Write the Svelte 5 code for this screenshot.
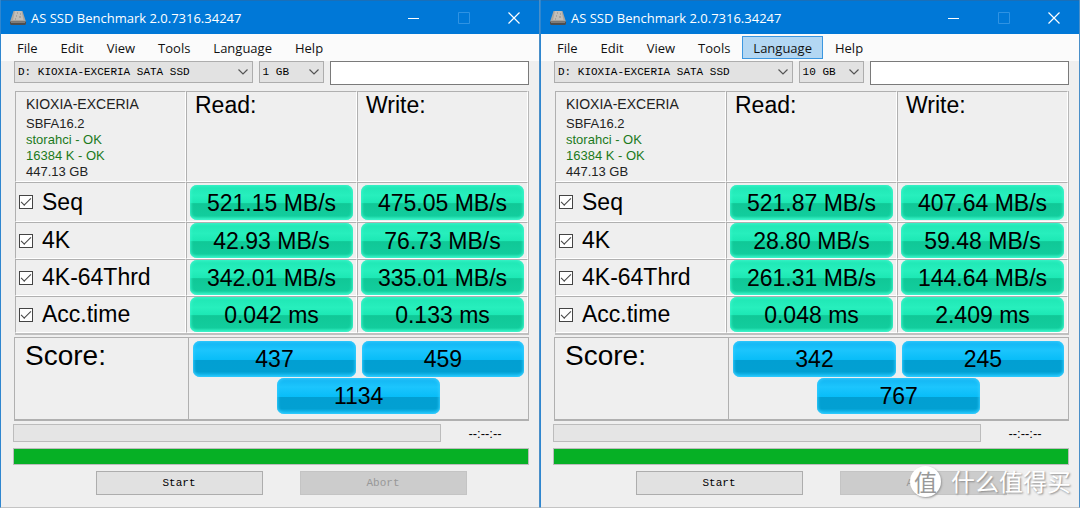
<script>
	const menu = ["File", "Edit", "View", "Tools", "Language", "Help"]
	const drive = "D: KIOXIA-EXCERIA SATA SSD"

	let windows = [
		{
			id: "left",
			size: "1 GB",
			activeMenu: "",
			tests: [
				{ name: "Seq", read: "521.15 MB/s", write: "475.05 MB/s", on: true },
				{ name: "4K", read: "42.93 MB/s", write: "76.73 MB/s", on: true },
				{ name: "4K-64Thrd", read: "342.01 MB/s", write: "335.01 MB/s", on: true },
				{ name: "Acc.time", read: "0.042 ms", write: "0.133 ms", on: true }
			],
			score: { read: 437, write: 459, total: 1134 }
		},
		{
			id: "right",
			size: "10 GB",
			activeMenu: "Language",
			tests: [
				{ name: "Seq", read: "521.87 MB/s", write: "407.64 MB/s", on: true },
				{ name: "4K", read: "28.80 MB/s", write: "59.48 MB/s", on: true },
				{ name: "4K-64Thrd", read: "261.31 MB/s", write: "144.64 MB/s", on: true },
				{ name: "Acc.time", read: "0.048 ms", write: "2.409 ms", on: true }
			],
			score: { read: 342, write: 245, total: 767 }
		}
	]
</script>

<style>
	:global(body) {
		background: #efefef;
	}
	.desktop {
		position: relative;
		display: flex;
		font-family: "Liberation Sans", Arial, sans-serif;
		color: #000;
	}
	.desktop * {
		box-sizing: border-box;
	}
	.window {
		flex: 1;
		min-width: 0;
		background: #efefef;
		border-left: 1px solid #2f86cf;
		border-right: 1px solid #4a8fc8;
		border-bottom: 1px solid #c4c4c4;
	}
	.titlebar {
		display: flex;
		align-items: center;
		height: 34px;
		padding-left: 8px;
		background: #0078d7;
		border-top: 1px solid #1a6fb8;
		color: #fff;
	}
	.titlebar h1 {
		flex: 1;
		margin: 0 0 0 4px;
		font: 400 13px/20px "Open Sans", sans-serif;
		white-space: nowrap;
	}
	.titlebar button {
		display: flex;
		justify-content: center;
		align-items: center;
		width: 50px;
		height: 33px;
		padding: 0;
		border: 0;
		background: none;
		color: #fff;
	}
	.titlebar button:disabled {
		color: #2f93e3;
	}
	.menu {
		display: flex;
		gap: 1px;
		height: 27px;
		padding: 2px 5px;
		background: #fbfbfb;
	}
	.menu button {
		height: 23px;
		padding: 0 10px;
		border: 1px solid transparent;
		background: none;
		font: 400 13px/20px "Open Sans", sans-serif;
		color: #111;
	}
	.menu button.active {
		background: #b3d7f3;
		border-color: #3c97e0;
	}
	.toolbar {
		display: flex;
		gap: 6px;
		padding: 0 10px 6px 13px;
	}
	.combo {
		display: grid;
		align-items: center;
		height: 22px;
	}
	.combo.drive {
		flex: 240;
	}
	.combo.size {
		flex: 66;
	}
	.combo select, .combo svg {
		grid-area: 1 / 1;
	}
	.combo select {
		appearance: none;
		width: 100%;
		height: 22px;
		padding: 0 3px;
		border: 1px solid #adadad;
		border-radius: 0;
		background: #e2e2e2;
		font: 11px "Liberation Mono", monospace;
		color: #000;
	}
	.combo svg {
		justify-self: end;
		margin-right: 4px;
		pointer-events: none;
	}
	.toolbar input {
		flex: 198;
		min-width: 0;
		height: 24px;
		padding: 0;
		border: 1px solid #7a7a7a;
		background: #fff;
	}
	.results {
		width: calc(100% - 24px);
		margin: 0 10px 0 14px;
		table-layout: fixed;
		border-spacing: 0;
		border-right: 1px solid #b8b8b8;
		border-bottom: 2px solid #c0c0c0;
	}
	.results td, .results th {
		height: 37px;
		padding: 0 3px;
		border: 1px solid #b0b0b0;
		border-right-color: #fff;
		border-bottom-color: #fff;
		font-size: 23px;
		font-weight: 400;
		text-align: left;
		white-space: nowrap;
	}
	.results thead td, .results thead th {
		height: 91px;
		padding: 0 8px;
		vertical-align: top;
		line-height: 26px;
	}
	.results .first td, .results .first th {
		height: 40px;
	}
	.results .info {
		padding: 2px 10px 0;
		font-size: 13px;
		line-height: 16px;
		color: #222;
	}
	.info div:first-child {
		margin-bottom: 2px;
		font-size: 14px;
		line-height: 20px;
	}
	.info .ok {
		color: #1c7a1c;
	}
	.results label {
		display: flex;
		align-items: center;
		gap: 9px;
	}
	.results input {
		appearance: none;
		display: grid;
		place-items: center;
		width: 14px;
		height: 14px;
		margin: 0;
		border: 1px solid #444;
		background: #fff;
	}
	.results input:checked::before {
		content: "";
		width: 9px;
		height: 4px;
		margin-bottom: 3px;
		border: solid #444;
		border-width: 0 0 1px 1px;
		transform: rotate(-45deg);
	}
	.pill {
		height: 35px;
		border-radius: 7px;
		font-size: 23px;
		line-height: 37px;
		text-align: center;
		background: linear-gradient(#1fe6b4, #27efbd 30%, #1ce8b4 52%, #10c897 53%, #12cd9d 88%, #35efc2);
		box-shadow: inset 0 0 3px 1px #3df5cb;
	}
	.pill.blue {
		flex: 0 0 calc(50% - 3px);
		height: 36px;
		background: linear-gradient(#12b4f2, #1cc5fd 25%, #08bdf8 52%, #029fd2 53%, #02a0d2 85%, #1cc4fa);
		box-shadow: inset 0 0 3px 1px #35ccff;
	}
	.score {
		display: grid;
		grid-template-columns: 174fr 341fr;
		height: 84px;
		margin: 2px 10px 3px 13px;
		border: 1px solid #b0b0b0;
		border-bottom-width: 2px;
	}
	.score h2 {
		margin: 0;
		padding: 1px 10px;
		font-size: 28px;
		font-weight: 400;
		line-height: 34px;
	}
	.score-values {
		display: flex;
		flex-wrap: wrap;
		justify-content: center;
		align-content: flex-start;
		gap: 1px 6px;
		padding: 3px 4px;
		border-left: 1px solid #b0b0b0;
	}
	.status {
		display: flex;
		align-items: center;
		padding: 0 10px 0 12px;
		font-size: 13px;
	}
	.bar {
		flex: 1;
		height: 18px;
		border: 1px solid #bcbcbc;
		background: #e5e5e5;
	}
	.time {
		width: 88px;
		text-align: center;
	}
	.bar.done {
		flex: none;
		height: 17px;
		margin: 6px 10px 6px 12px;
		background: #06b025;
	}
	.actions {
		display: flex;
		justify-content: center;
		gap: 37px;
		padding: 0 0 12px 22px;
	}
	.actions button {
		width: 167px;
		height: 24px;
		padding: 0;
		border: 1px solid #adadad;
		background: #e1e1e1;
		font: 11px "Liberation Mono", monospace;
		color: #000;
	}
	.actions button:disabled {
		border-color: #c4c4c4;
		background: #ccc;
		color: #989898;
	}
	.watermark {
		position: absolute;
		right: 9px;
		bottom: 10px;
		display: flex;
		align-items: center;
		gap: 10px;
		font: 400 24px/34px "Noto Sans CJK SC", sans-serif;
		color: #fff;
		text-shadow: 1px 1px 2px #888;
		pointer-events: none;
	}
	.watermark .badge {
		width: 31px;
		height: 31px;
		border-radius: 50%;
		background: #fff;
		box-shadow: 1px 1px 2px #999;
		color: #999;
		font-size: 23px;
		line-height: 30px;
		text-align: center;
		text-shadow: none;
	}
</style>

<div class="desktop">
	{#each windows as win}
		<section class="window">
			<header class="titlebar">
				<svg width="18" height="16" viewBox="0 0 18 16">
					<path d="M4.500 1h9L17 12H1z" fill="#a9a59f" />
					<path d="M6 1h6.500l2 9H4z" fill="#c2beb8" />
					<path d="M1 11.500h16v2.500l-1 1H2l-1-1z" fill="#4d4d4d" />
					<path d="M2 12h14v1H2z" fill="#7d7d7d" />
					<path d="M8 3h1M11 4h1M7 6h1M10 7h2M6 9h1" stroke="#8d8983" />
				</svg>
				<h1>AS SSD Benchmark 2.0.7316.34247</h1>
				<button aria-label="Minimize">
					<svg width="12" height="12" viewBox="0 0 12 12"><path d="M0 6.5h11" stroke="currentColor" /></svg>
				</button>
				<button aria-label="Maximize" disabled>
					<svg width="12" height="12" viewBox="0 0 12 12"><path d="M.5.5h11v11H.5z" fill="none" stroke="currentColor" /></svg>
				</button>
				<button aria-label="Close">
					<svg width="12" height="12" viewBox="0 0 12 12"><path d="M.5.5l11 11M11.5.5l-11 11" stroke="currentColor" stroke-width="1.2" /></svg>
				</button>
			</header>

			<nav class="menu">
				{#each menu as item}
					<button class:active={item === win.activeMenu}>{item}</button>
				{/each}
			</nav>

			<div class="toolbar">
				<div class="combo drive">
					<select aria-label="Drive"><option>{drive}</option></select>
					<svg width="12" height="8" viewBox="0 0 12 8"><path d="M1.5 1.5L6 6l4.5-4.5" fill="none" stroke="#555" stroke-width="1.2" /></svg>
				</div>
				<div class="combo size">
					<select aria-label="Test size"><option>{win.size}</option></select>
					<svg width="12" height="8" viewBox="0 0 12 8"><path d="M1.5 1.5L6 6l4.5-4.5" fill="none" stroke="#555" stroke-width="1.2" /></svg>
				</div>
				<input type="text" aria-label="Notes">
			</div>

			<table class="results">
				<thead>
					<tr>
						<td class="info">
							<div>KIOXIA-EXCERIA</div>
							<div>SBFA16.2</div>
							<div class="ok">storahci - OK</div>
							<div class="ok">16384 K - OK</div>
							<div>447.13 GB</div>
						</td>
						<th scope="col">Read:</th>
						<th scope="col">Write:</th>
					</tr>
				</thead>
				<tbody>
					{#each win.tests as test, i}
						<tr class:first={i === 0}>
							<th scope="row">
								<label for="{win.id}-{i}">
									<input type="checkbox" id="{win.id}-{i}" bind:checked={test.on}>
									{test.name}
								</label>
							</th>
							<td><div class="pill">{test.read}</div></td>
							<td><div class="pill">{test.write}</div></td>
						</tr>
					{/each}
				</tbody>
			</table>

			<div class="score">
				<h2>Score:</h2>
				<div class="score-values">
					<div class="pill blue">{win.score.read}</div>
					<div class="pill blue">{win.score.write}</div>
					<div class="pill blue">{win.score.total}</div>
				</div>
			</div>

			<div class="status">
				<div class="bar"></div>
				<div class="time">--:--:--</div>
			</div>
			<div class="bar done"></div>

			<div class="actions">
				<button>Start</button>
				<button disabled>Abort</button>
			</div>
		</section>
	{/each}

	<div class="watermark">
		<span class="badge">值</span>
		<span>什么值得买</span>
	</div>
</div>
